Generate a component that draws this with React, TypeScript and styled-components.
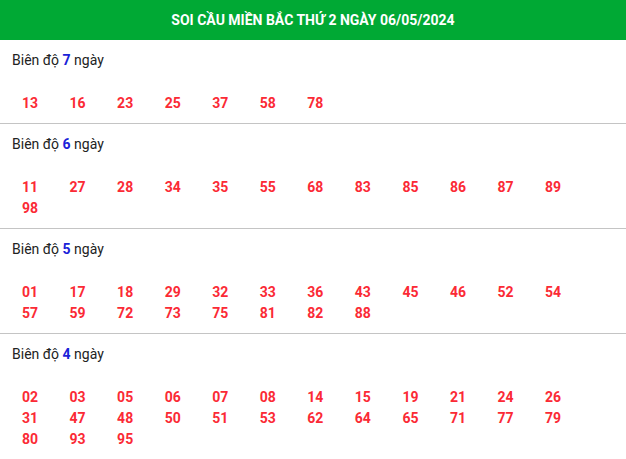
import styled, { createGlobalStyle } from 'styled-components';

const GlobalStyle = createGlobalStyle`
    body {
        margin: 0;
        background: #fff;
        font-family: Roboto, "Noto Sans", Arial, sans-serif;
    }
`;

const Wrap = styled.div`
    width: 626px;
    background: #fff;
`;

const Header = styled.h2`
    margin: 0;
    height: 39px;
    padding-bottom: 1px;
    display: flex;
    align-items: center;
    justify-content: center;
    background: #00a934;
    color: #fff;
    font-size: 14px;
    font-weight: 700;
    text-transform: uppercase;
`;

const Section = styled.div`
    padding: 10px 12px 9px;
    border-bottom: 1px solid #c4c4c4;

    &:last-child {
        border-bottom: none;
    }
`;

const Label = styled.div`
    color: #222;
    font-size: 14px;
    line-height: 20px;
`;

const Days = styled.b`
    color: #1a22d8;
    font-weight: 700;
`;

const NumberGrid = styled.div`
    display: grid;
    grid-template-columns: repeat(12, 47.55px);
    margin: 23px 0 0 10px;
`;

const Num = styled.span`
    color: #fb2a35;
    font-size: 14px;
    font-weight: 700;
    line-height: 21px;
`;

const groups: { days: number; numbers: string[] }[] = [
    { days: 7, numbers: ['13', '16', '23', '25', '37', '58', '78'] },
    {
        days: 6,
        numbers: ['11', '27', '28', '34', '35', '55', '68', '83', '85', '86', '87', '89', '98'],
    },
    {
        days: 5,
        numbers: [
            '01', '17', '18', '29', '32', '33', '36', '43', '45', '46', '52', '54',
            '57', '59', '72', '73', '75', '81', '82', '88',
        ],
    },
    {
        days: 4,
        numbers: [
            '02', '03', '05', '06', '07', '08', '14', '15', '19', '21', '24', '26',
            '31', '47', '48', '50', '51', '53', '62', '64', '65', '71', '77', '79',
            '80', '93', '95',
        ],
    },
];

export default function App() {
    return (
        <>
            <GlobalStyle />
            <Wrap>
                <Header>Soi cầu miền Bắc thứ 2 ngày 06/05/2024</Header>
                {groups.map(group => (
                    <Section key={group.days}>
                        <Label>
                            Biên độ <Days>{group.days}</Days> ngày
                        </Label>
                        <NumberGrid>
                            {group.numbers.map(n => (
                                <Num key={n}>{n}</Num>
                            ))}
                        </NumberGrid>
                    </Section>
                ))}
            </Wrap>
        </>
    );
}
